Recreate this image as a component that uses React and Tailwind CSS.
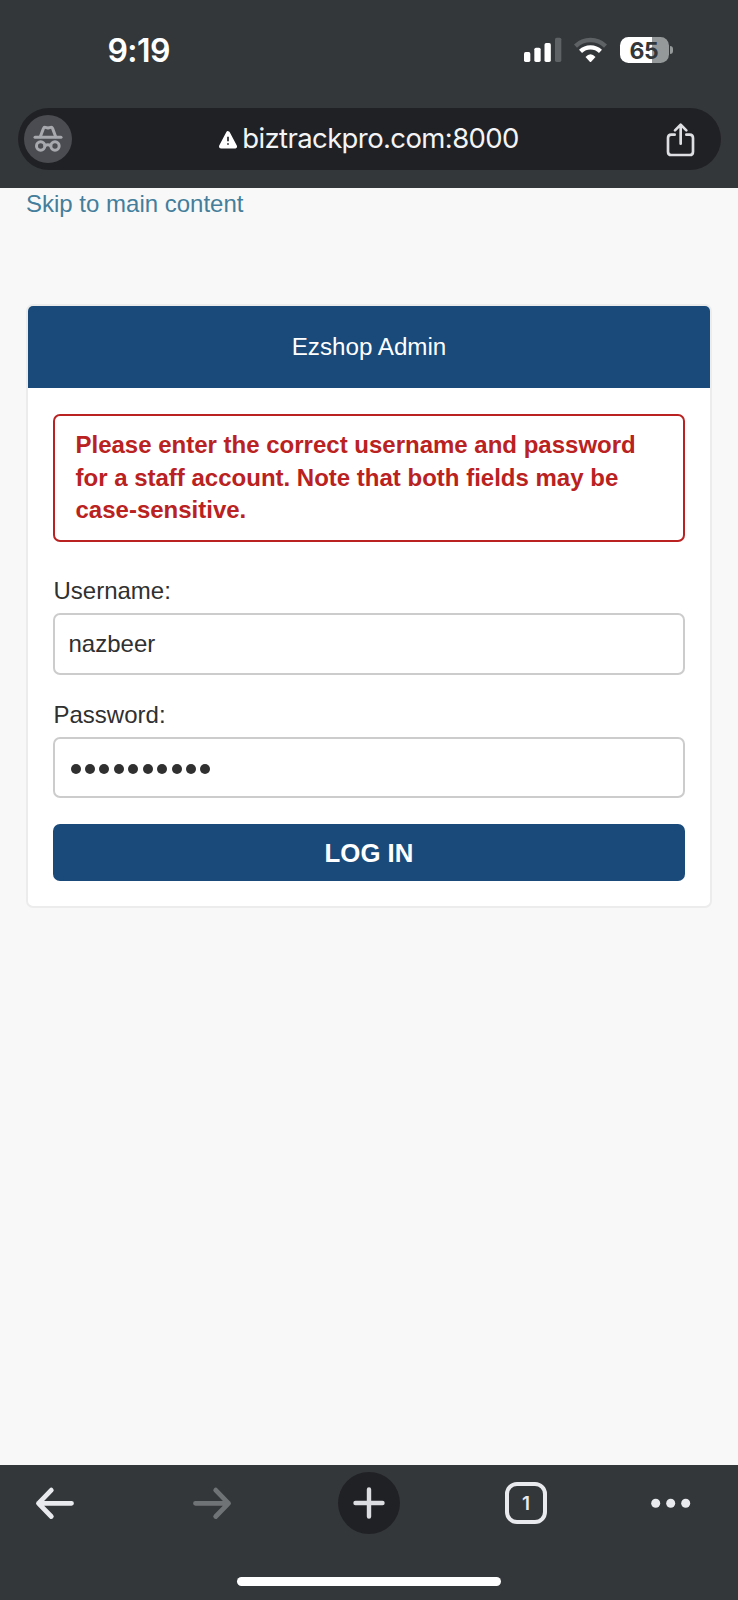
const sans = "font-['Liberation_Sans',Arial,sans-serif]";

function StatusBar() {
  return (
    <div className="flex h-[100px] items-start text-white">
      <div className="ml-[107.500px] mt-[31px] w-[416.500px] text-[32px] leading-[39px] font-semibold tracking-[-0.6px]">9:19</div>
      <svg className="mt-[37px] h-[26px] w-[38px]" viewBox="0 0 114 78" fill="#fff">
        <rect x="0" y="45" width="19" height="30" rx="5" />
        <rect x="31" y="32" width="19" height="43" rx="5" />
        <rect x="61.500" y="18" width="19" height="57" rx="5" />
        <rect x="93" y="2" width="19" height="73" rx="5" fill="#5f6264" />
      </svg>
      <svg className="ml-[12px] mt-[37px] h-[26px] w-[33px]" viewBox="0 -2 99 78" fill="none" strokeWidth="13">
        <path d="M4.500 25.200A65 65 0 0 1 94.500 25.200" stroke="#5f6264" />
        <path d="M19.600 41.100A43 43 0 0 1 79.400 41.100" stroke="#fff" />
        <path d="M34.500 58Q49.500 42 64.500 58L51.500 72Q49.500 74 47.500 72Z" fill="#fff" />
      </svg>
      <div className="ml-[13px] mt-[37px] flex items-center">
        <div className="flex h-[26px] w-[49px] items-center justify-center rounded-[8.500px] bg-[linear-gradient(90deg,#fff_64.500%,#96999a_64.500%)] pt-[1px] pr-[1px] text-[23px] leading-[26px] font-bold tracking-[-0.4px] text-[#34373a]">65</div>
        <div className="ml-[1px] h-[8px] w-[3px] rounded-r-[3px] bg-[#96999a]" />
      </div>
    </div>
  );
}

function AddressBar() {
  return (
    <div className="mx-[17.500px] mt-[8px] grid h-[62px] grid-cols-[1fr_auto_1fr] items-center rounded-full bg-[#202125]">
      <div className="ml-[6.200px] h-[48px] w-[48px] rounded-full bg-[#4a4c51]">
        <svg className="h-[48px] w-[48px]" viewBox="0 0 144 144" fill="none" stroke="#a7a9af" strokeWidth="9" strokeLinecap="round" strokeLinejoin="round">
          <path d="M33 67H111" />
          <path d="M49 65L58 41Q60 36 64 37L72 39L80 37Q84 36 86 41L95 65" />
          <circle cx="50" cy="93" r="12.500" />
          <circle cx="93" cy="93" r="12.500" />
          <path d="M63 92Q71.500 87 80 92" />
        </svg>
      </div>
      <div className="flex items-center">
        <svg className="mt-[1px] h-[18px] w-[18px]" viewBox="0 0 54 53">
          <path d="M27 6L48 46H6Z" fill="#fff" stroke="#fff" strokeWidth="12" strokeLinejoin="round" />
          <path d="M27 17V30M27 36V41" stroke="#202125" strokeWidth="5" />
        </svg>
        <span className="mt-[-3px] ml-[5px] text-[27.500px] leading-[34px] tracking-[-0.6px] whitespace-nowrap text-[#f4f4f6]">biztrackpro.com:8000</span>
      </div>
      <svg className="mt-[1px] mr-[24.500px] h-[37px] w-[32px] justify-self-end" viewBox="0 0 96 111" fill="none" stroke="#dedfe3" strokeWidth="8" strokeLinecap="round" strokeLinejoin="round">
        <path d="M32 41H22Q12 41 12 51V92Q12 102 22 102H77Q87 102 87 92V51Q87 41 77 41H67" />
        <path d="M50 68V12M33 28L50 11L67 28" />
      </svg>
    </div>
  );
}

function LoginCard() {
  return (
    <div className="mx-[26px] mt-[86px] h-[604px] overflow-hidden rounded-[7px] border-2 border-[#ececec] bg-white">
      <div className="flex h-[82px] items-center justify-center bg-[#194a7a] pt-[1px] text-[24.200px] text-white">Ezshop Admin</div>
      <div className="px-[25px] pt-[26px]">
        <div className="h-[128px] rounded-[7px] border-2 border-[#ba2121] pt-[13px] pl-[20.500px] text-[24px] leading-[32.700px] font-bold text-[#ba2121]">
          Please enter the correct username and password<br />for a staff account. Note that both fields may be<br />case-sensitive.
        </div>
        <div className="mt-[33px] h-[38px] pl-[0.500px] leading-[32px] text-[#303030]">Username:</div>
        <div className="flex h-[62px] items-center rounded-[7px] border-2 border-[#ccc] pl-[13.500px] text-[#303030]">nazbeer</div>
        <div className="mt-[24px] h-[38px] pl-[0.500px] leading-[32px] text-[#303030]">Password:</div>
        <div className="flex h-[61px] items-center gap-[4px] rounded-[7px] border-2 border-[#ccc] pt-[3px] pl-[15.500px]">
          {Array.from({ length: 10 }, (_, i) => (
            <span key={i} className="mr-[0.450px] h-[10px] w-[10px] rounded-full bg-[#303030]" />
          ))}
        </div>
        <div className="mt-[26px] flex h-[57px] items-center justify-center rounded-[7px] bg-[#194a7a] pt-[1.500px] text-[25.800px] font-bold text-white">LOG IN</div>
      </div>
    </div>
  );
}

function BottomBar() {
  return (
    <div className="flex h-[135px] flex-col bg-[#34373a]">
      <div className="flex h-[76px] items-center">
        <svg className="ml-[34px] h-[36px] w-[42px]" viewBox="0 0 42 36" fill="none" stroke="#e8eaed" strokeWidth="4.800" strokeLinecap="round" strokeLinejoin="round">
          <path d="M37.500 18.300H4.500M17.300 5.100L4.500 18.300L17.300 31.500" />
        </svg>
        <svg className="ml-[115px] h-[36px] w-[42px]" viewBox="0 0 42 36" fill="none" stroke="#707376" strokeWidth="4.800" strokeLinecap="round" strokeLinejoin="round">
          <path d="M4.500 18.300H37.500M24.700 5.100L37.500 18.300L24.700 31.500" />
        </svg>
        <div className="ml-[105px] flex h-[62px] w-[62px] items-center justify-center rounded-full bg-[#202125]">
          <svg className="h-[34px] w-[34px]" viewBox="0 0 34 34" stroke="#dcdde1" strokeWidth="4.400" strokeLinecap="round">
            <path d="M17 3.500V30.500M3.500 17H30.500" />
          </svg>
        </div>
        <div className="ml-[105px] flex h-[42px] w-[42px] items-center justify-center rounded-[12px] border-4 border-[#e8eaed] pt-[2px] text-[19px] font-semibold text-[#e8eaed]">1</div>
        <svg className="ml-[104px] h-[10px] w-[40px]" viewBox="0 0 40 10" fill="#e8eaed">
          <circle cx="4.700" cy="5.300" r="4.500" />
          <circle cx="19.700" cy="5.300" r="4.500" />
          <circle cx="34.700" cy="5.300" r="4.500" />
        </svg>
      </div>
      <div className="mx-auto mt-[36px] h-[9px] w-[264px] rounded-full bg-white" />
    </div>
  );
}

export default function App() {
  return (
    <div className="flex h-[1600px] w-[738px] flex-col overflow-hidden bg-[#f8f8f8] font-[Inter,sans-serif]">
      <div className="h-[188px] bg-[#34373a]">
        <StatusBar />
        <AddressBar />
      </div>
      <main className={`flex-1 text-[24px] ${sans}`}>
        <div className="h-[30px] pl-[26px] leading-[31px] text-[#447e9b]">Skip to main content</div>
        <LoginCard />
      </main>
      <BottomBar />
    </div>
  );
}
